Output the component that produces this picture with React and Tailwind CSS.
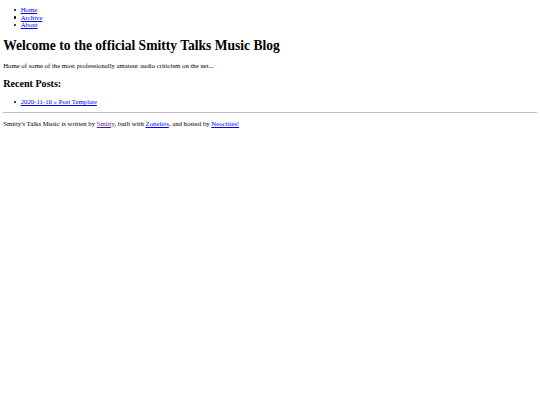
function Item({ children }) {
  return (
    <li className="flex items-center">
      <span className="mr-[4.6px] inline-block h-[2.3px] w-[2.3px] shrink-0 rounded-full bg-black" />
      {children}
    </li>
  );
}

export default function App() {
  return (
    <div className="min-h-[405px] bg-white px-[3.2px] pb-[3.2px] text-black text-[6.75px] leading-[7.4px]" style={{ fontFamily: '"Liberation Serif", "Times New Roman", serif' }}>
      <nav className="pt-[6.4px]">
        <ul className="mb-[6.4px] pl-[10.6px]">
          <Item><a href="#" className="text-[#0000ee] underline">Home</a></Item>
          <Item><a href="#" className="text-[#0000ee] underline">Archive</a></Item>
          <Item><a href="#" className="text-[#0000ee] underline">About</a></Item>
        </ul>
      </nav>
      <h1 className="my-[9px] text-[13.55px] font-bold leading-[1.15]">Welcome to the official Smitty Talks Music Blog</h1>
      <p className="my-[6.7px]">Home of some of the most professionally amateur audio criticism on the net...</p>
      <h2 className="my-[8.4px] text-[10.1px] font-bold leading-[1.15]">Recent Posts:</h2>
      <ul className="my-[6.7px] pl-[10.6px]">
        <Item><a href="#" className="text-[#0000ee] underline">2020-11-10 » Post Template</a></Item>
      </ul>
      <footer>
        <hr className="my-[3.4px] border-t border-[#c0c0c0]" />
        <p className="my-[6.7px]">
          Smitty's Talks Music is written by <a href="#" className="text-[#551a8b] underline">Smitty</a>, built with <a href="#" className="text-[#0000ee] underline">Zonelets</a>, and hosted by <a href="#" className="text-[#0000ee] underline">Neocities!</a>
        </p>
      </footer>
    </div>
  );
}
